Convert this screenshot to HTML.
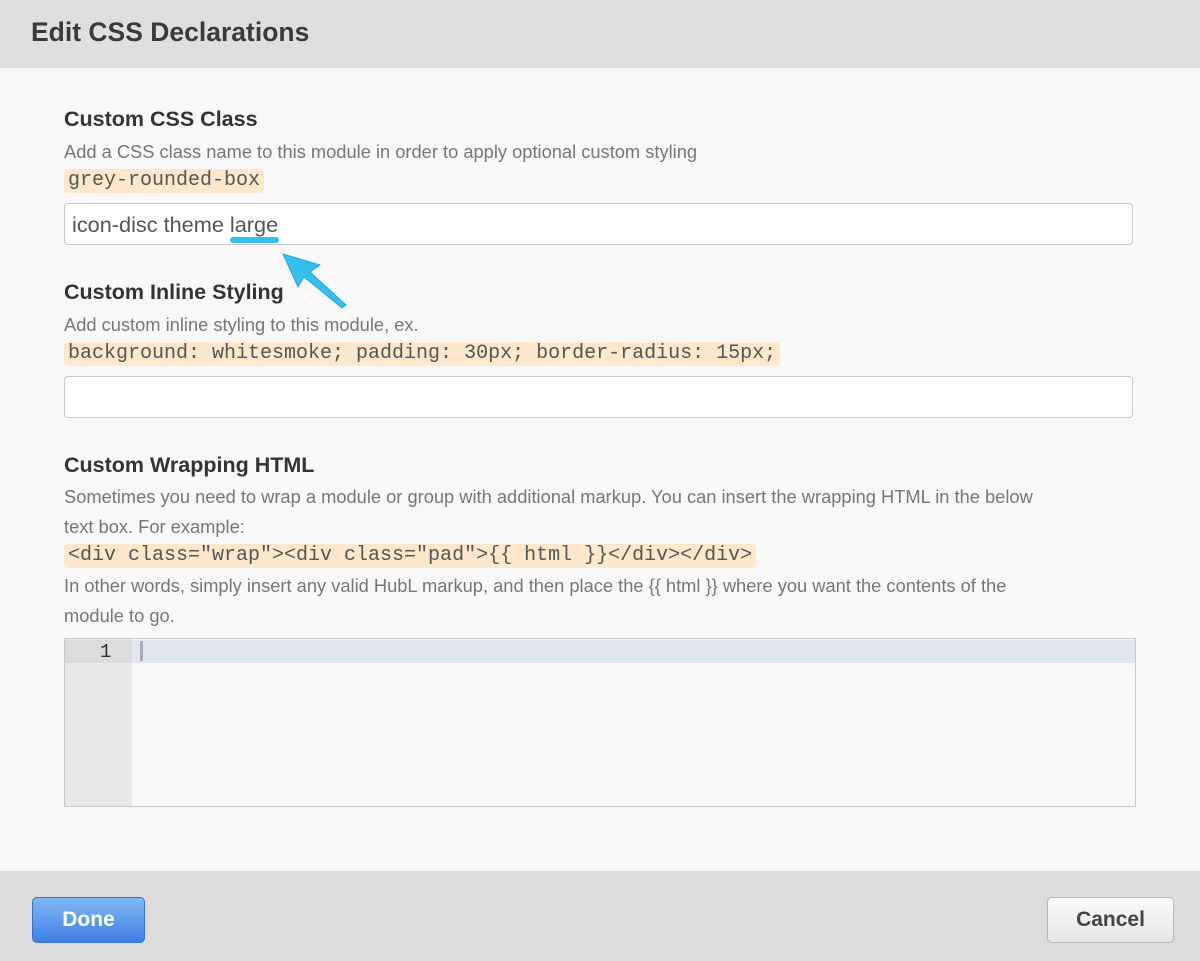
<!DOCTYPE html>
<html><head><style>
body{margin:0;width:1200px;height:961px;background:#f8f8f8;font-family:"Liberation Sans",sans-serif;position:relative;overflow:hidden}
.hdr{position:absolute;left:0;top:0;width:1200px;height:68px;background:#dfdfdf}
.hdr h1{margin:0;position:absolute;left:31px;top:17px;font-size:26.5px;color:#3a3a3a;font-weight:bold}
.h{position:absolute;left:64px;font-size:21.5px;font-weight:bold;color:#333}
.d{position:absolute;left:64px;font-size:18.3px;color:#777}
.c{position:absolute;left:64px;font-family:"Liberation Mono",monospace;font-size:20px;color:#555;background:#fde8cb;border-radius:4px;padding:1px 4px;line-height:22px}
.in{position:absolute;left:64px;width:1067px;height:40px;background:#fff;border:1px solid #c8c8c8;border-radius:4px}
.ft{position:absolute;left:0;top:871px;width:1200px;height:90px;background:#dcdcdc}
.btn{position:absolute;top:897px;height:44px;border-radius:5px;font-weight:bold;font-size:21px;text-align:center;line-height:44px}
</style></head><body>
<div class="hdr"><h1>Edit CSS Declarations</h1></div>
<div class="h" style="top:107px">Custom CSS Class</div>
<div class="d" style="top:141px">Add a CSS class name to this module in order to apply optional custom styling</div>
<div class="c" style="top:169px">grey-rounded-box</div>
<div class="in" style="top:203px"><span style="position:absolute;left:7px;top:8px;font-size:21.7px;color:#555">icon-disc theme large</span></div>
<div style="position:absolute;left:230px;top:237px;width:49px;height:6px;border-radius:3px;background:#35bfee"></div>
<svg style="position:absolute;left:270px;top:245px" width="85" height="70"><path d="M13 9 L50 20 L40 27 L76 60 L72 63 L34 32 L28 42 Z" fill="#35bfee" stroke="#2aa9d8" stroke-width="1" stroke-linejoin="round"/></svg>
<div class="h" style="top:280px">Custom Inline Styling</div>
<div class="d" style="top:314px">Add custom inline styling to this module, ex.</div>
<div class="c" style="top:342px">background: whitesmoke; padding: 30px; border-radius: 15px;</div>
<div class="in" style="top:376px"></div>
<div class="h" style="top:453px">Custom Wrapping HTML</div>
<div class="d" style="top:486px">Sometimes you need to wrap a module or group with additional markup. You can insert the wrapping HTML in the below</div>
<div class="d" style="top:516px">text box. For example:</div>
<div class="c" style="top:544px">&lt;div class="wrap"&gt;&lt;div class="pad"&gt;{{ html }}&lt;/div&gt;&lt;/div&gt;</div>
<div class="d" style="top:575px">In other words, simply insert any valid HubL markup, and then place the {{ html }} where you want the contents of the</div>
<div class="d" style="top:605px">module to go.</div>
<div style="position:absolute;left:64px;top:638px;width:1070px;height:167px;border:1px solid #c8c8c8;background:#f8f8f8">
<div style="position:absolute;left:0;top:0;width:67px;height:167px;background:#e8e8e8"></div>
<div style="position:absolute;left:0;top:1px;width:1070px;height:23px;background:#e1e5ee"></div>
<div style="position:absolute;left:0;top:1px;width:67px;height:23px;background:#dcdcdc"></div>
<div style="position:absolute;left:35px;top:2px;font-family:'Liberation Mono',monospace;font-size:19px;color:#333">1</div>
<div style="position:absolute;left:75px;top:2px;width:3px;height:20px;background:#aab"></div>
</div>
<div class="ft"></div>
<div class="btn" style="left:32px;width:111px;background:linear-gradient(#7fb8f4,#3f7fe6);border:1px solid #3b6fd0;color:#fff">Done</div>
<div class="btn" style="left:1047px;width:125px;background:linear-gradient(#fafafa,#e6e6e6);border:1px solid #b8b8b8;color:#444">Cancel</div>
</body></html>
